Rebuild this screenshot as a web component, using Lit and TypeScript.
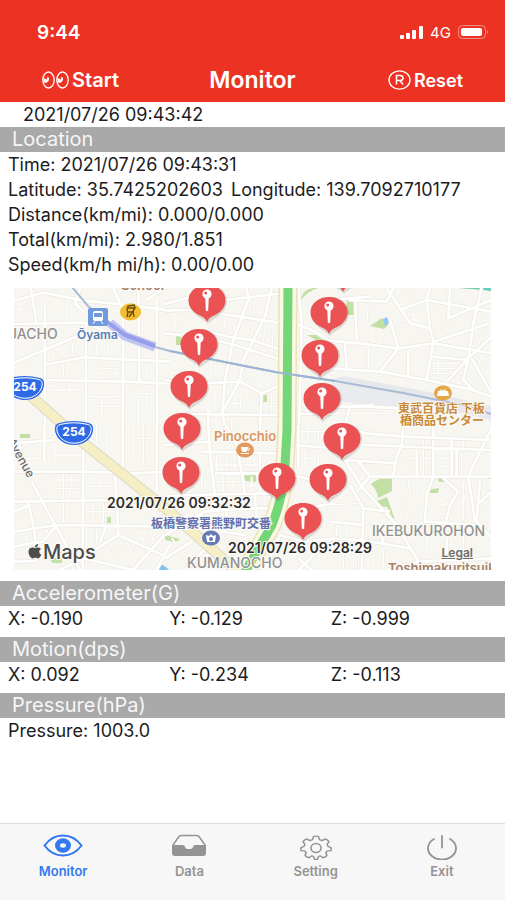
import { LitElement, html, svg, css } from "lit";
import { customElement, property, state } from "lit/decorators.js";

/* Map data: streets are grouped in tiles drawn at three times the map scale. */
interface Tile {
  x: number;
  y: number;
  streets: string;
  lanes: string;
}

const TILES: Tile[] = [
  {
    x: -14, y: -8,
    streets:
      "M42 62L130 38 250 62 395 76 510 92M42 132L255 128 330 160M92 24L110 132M135 75V450M42 248L240 165M133 255L250 232 510 245M258 135V450M133 300L370 305 510 310M370 165L368 450M415 24L418 305M470 60L472 450M340 24L365 80 372 165M240 24L225 70 255 100M500 20L440 60",
    lanes:
      "M42 92L100 80M60 62V130M160 50L165 128M200 55V128M290 200V232M325 195V240M190 245V300M210 300V420M305 350V430M260 350H368M285 380H368M330 350V385M300 265H350V300M415 340H470M415 340V450M440 340V400M215 180L220 235M160 190V250M60 170V245M90 160V230M100 310H133M150 330H250M180 330V420M415 250V305M440 250V305",
  },
  {
    x: 151, y: -8,
    streets:
      "M0 72L80 50M180 60L350 40M160 100L355 130M245 24L250 60 205 180 180 300 172 400 182 450M320 24L300 110 235 240 225 300 170 400M150 180L210 195 350 240M0 92L70 90M0 300L60 310 20 290M110 310L225 305 290 340 340 318M290 340L285 450M60 402L350 405M95 255L100 310M130 390V450M0 160L50 165M400 135L440 150 510 190M400 24L410 130 402 450M400 402H510M260 180L350 210M110 150L190 170 270 182",
    lanes:
      "M190 60L175 160M215 115L205 170M270 60L260 170M300 150L290 215M325 130L320 230M30 100V150M140 210L135 300M160 260H210M225 250L350 290M250 300L245 320M150 330V395M210 340V400M190 370H225M230 320L225 400M320 340V400M300 380H350M310 290V320M200 420V450M240 410V450M315 410V450M390 180H430M390 230H410M70 370V400",
  },
  {
    x: 316, y: -8,
    streets:
      "M55 60L170 65 190 24M0 60L120 50M170 24L200 70 240 130 300 145 310 185 480 130M210 90L290 60 485 95M75 60L80 180M0 182L90 190 205 205 310 190 485 220M205 205L150 275M180 120L205 205M300 24L290 60 300 145M360 24L355 115 485 60M455 24L430 130 415 235 350 305M310 190L290 300M0 265L150 275 290 300 410 325 485 350M415 235L400 300 430 330M425 235L485 340M45 190L50 265M300 230L415 240M235 210V290M0 380L120 380 210 385M40 450L60 380 130 375M485 170L415 235",
    lanes:
      "M110 80L115 140M150 70V110M100 145V190M125 145V190M150 140V195M225 60L250 20M245 80L255 130M270 120H200M320 80L330 130M395 40L400 100M365 120L370 165M400 150L395 190M340 190L335 230M295 250H380M295 265H375M295 280H365M440 160L455 210M455 220L440 270 460 300M90 200V268M115 200V270M170 220L235 215M325 240V300M270 200V290M120 400V450M180 400V450M15 400H180M380 260L410 300",
  },
  {
    x: -14, y: 137,
    streets:
      "M42 55L160 45M42 140L250 140 400 145 510 140M42 230L350 225 510 220M133 0V110M250 60L248 435M95 170L160 290 240 435M42 320L170 300 510 305M42 410L110 408M85 230L105 330 110 410M368 0V145M470 0V200M345 145L350 225 355 330 245 400M510 310L400 435M355 330L510 400M180 435L250 400 400 435M42 365L130 350M130 350L170 300M510 360L470 435M320 300L300 350M42 260L90 240",
    lanes:
      "M60 55V140M90 55V140M42 100H133M165 60V140M210 60V140M165 90H245M190 145V225M215 150L210 210 180 240M165 165H248M165 190H230M190 230V300M270 150V220M300 160V220M250 185H345M310 230V300M280 230V300M250 260H345M400 0V90M430 0V110M400 40H470M60 235L70 320M60 330V400M80 330V400M140 310L155 370M190 320L215 360M260 310V380M290 310V350M420 310L430 360M380 350L420 435M450 310L460 350M330 350L345 400M300 370L330 420M400 20V50M290 60V0M320 80V20",
  },
  {
    x: 151, y: 137,
    streets:
      "M0 215L60 210M60 210L340 205M130 0L135 90 150 210 140 260M182 0L215 60 235 170 240 210M110 80L340 85M150 145L350 145M180 210L185 275M0 60L130 50M285 85V210M270 210L275 280M0 330L120 260 230 250 330 250M60 435L170 320 240 330M400 0V130M380 60L510 70M385 150L440 165M345 260L510 235M345 330L420 350 510 340M110 390L230 400M0 400L80 350M300 435L345 330M180 435L200 350M400 400L440 435M510 330L400 435",
    lanes:
      "M60 0V80M90 20V60M155 90V145M185 60V145M210 90V145M255 90V150M310 90V150M150 120H280M155 170H235M175 150V205M205 150V205M260 155V205M310 155V205M250 180H340M110 150V210M210 210V250M235 215V250M300 210V250M390 20H480M430 0V70M460 0V70M390 100H450M420 75V130M460 75V120M390 220L400 260M20 340L60 390M80 310L120 370M140 340L170 390M240 330L260 390M280 300L300 340M355 350L360 430M390 350V400M480 350V420",
  },
  {
    x: 316, y: 137,
    streets:
      "M45 105L95 185 200 300 265 410 270 435M85 20L110 25 225 35 485 45M100 60L485 75M220 0L215 60 195 110 190 155M120 155H485M85 110L120 155 80 200M485 10L430 120 415 155 435 290M310 155L290 210 285 290 435 300M340 160L385 200 360 240 345 300M60 180L100 250 95 435M0 290L100 300M100 250L180 260M45 105L200 115M260 75V155M310 0V155M365 45V155M380 75V155M265 410L485 400M0 340L95 345 240 370M170 435L265 410M450 160L440 290 485 340M485 200L440 240M150 300L160 360M350 340V400",
    lanes:
      "M120 30V100M150 30V115M180 35V110M240 40V70M280 45V155M335 45V75M400 45V75M440 50V80M230 100H310M320 100H365M320 125H365M395 90V150M420 80V110M235 165L240 210 230 280M260 180V200M320 215L350 235M325 240H350M320 270L350 265M400 170V280M410 200L395 240M120 320V360M20 300V340M50 300V345M40 350V430M70 350V430M130 370V430M160 375V420M200 340V370M220 350V400M290 300V400M320 305V400M400 300V400M0 200L50 215M0 240L90 235",
  },
];

const PARKS = [
  "M162 47h5v10h-5z", "M247 107h6v7h-6z", "M286 11q5 -11 14 -11l4 0q-10 3 -17 12z",
  "M333 12h7v15h-9z", "M293 47h9l14 9v4z", "M6 146h10v4H6z",
  "M357 196q10 -8 21 -7v14l-14 7q0 -7 -7 -14z", "M363 213l10 -4 7 20v4l-7 -14 -9 -1z",
  "M414 202l11 -2 -1 5 -10 0z", "M424 190h6v4h-5z", "M226 187h16v7l-10 -1z",
  "M93 229h4v6h-4z", "M151 247l15 4 -4 3 -11 -2z", "M445 0h33v3z", "M36 270h12v5H38z",
];

/* Tip of each pin, in map coordinates. */
const PINS: [number, number][] = [
  [329, 4], [193, 34], [315, 46], [185, 78], [306, 89], [175, 120], [308, 132],
  [168, 162], [328, 172], [167, 206], [263, 212], [314, 213], [289, 252],
];

@customElement("track-map")
export class TrackMap extends LitElement {
  static styles = css`
    :host { display: block; position: relative; }
    .canvas { display: block; width: 100%; height: auto; }
    .lane { fill: none; stroke: #fff; stroke-width: 4; }
    .lane-edge { fill: none; stroke: #eeebe3; stroke-width: 7; }
    .street-edge { fill: none; stroke: #ebe8df; stroke-width: 12; stroke-linejoin: round; }
    .street { fill: none; stroke: #fff; stroke-width: 8; stroke-linejoin: round; }
    .label { font-family: Inter, "Liberation Sans", sans-serif; font-weight: 600; stroke: #fbfaf6; stroke-width: 2; paint-order: stroke; }
    .cjk { font-family: "Noto Sans CJK JP", sans-serif; font-weight: 700; font-size: 12px; }
    .district { fill: #929292; font-size: 14px; font-weight: 500; }
    .station { fill: #5580b8; font-size: 12px; }
    .shop { fill: #c98a3a; }
    .cafe { fill: #d99561; font-size: 13px; }
    .police { fill: #6370ad; }
    .school { fill: #a37f6a; font-size: 13px; }
    .avenue { fill: #6b6b6b; font-size: 12px; font-weight: 500; }
    .shield { fill: #fff; font-size: 12px; font-weight: 700; stroke: none; }
    .stamp { fill: #2c2c2e; font-size: 14px; }
    .brand { fill: #4c4c4c; font-size: 20px; font-weight: 500; }
    .legal {
      position: absolute; right: 18px; bottom: 10px;
      font: 600 12px/14px Inter, "Liberation Sans", sans-serif; color: #6f6f6f;
    }
  `;

  private pin([x, y]: [number, number]) {
    return svg`
      <g transform="translate(${x} ${y})">
        <path d="M0 1C-3 -4 -19 -8 -19 -22C-19 -32 -10 -38 0 -38C10 -38 19 -32 19 -22C19 -8 3 -4 0 1Z" fill="#000" opacity=".12" transform="translate(1 1)" />
        <path d="M0 0C-2 -5 -6 -6 -10 -8C-15 -11 -18.500 -16 -18.500 -21.500C-18.500 -31 -10 -37 0 -37C10 -37 18.500 -31 18.500 -21.500C18.500 -16 15 -11 10 -8C6 -6 2 -5 0 0Z" fill="#eb5254" />
        <path d="M-1.700 -24L-1.200 -11.500Q0 -10 1.200 -11.500L1.700 -24Z" fill="#fff" />
        <circle cx="0" cy="-28" r="4.600" fill="#fff" />
        <circle cx="-1.300" cy="-29" r="1.500" fill="#eb5254" />
      </g>`;
  }

  private shield(x: number, y: number) {
    return svg`
      <g transform="translate(${x} ${y})">
        <path d="M-15 -10Q0 -14 15 -10Q20 -9 19 -2C17 8 8 12 0 12C-8 12 -17 8 -19 -2Q-20 -9 -15 -10Z" fill="#2f6be6" />
        <path d="M-14 -8.500Q0 -12 14 -8.500Q18 -7.500 17 -2C15 6 8 10.200 0 10.200C-8 10.200 -15 6 -17 -2Q-18 -7.500 -14 -8.500Z" fill="none" stroke="#fff" />
        <text class="label shield" x="0" y="3" text-anchor="middle">254</text>
      </g>`;
  }

  render() {
    return html`
      <svg class="canvas" viewBox="0 0 477 282" role="img" aria-label="Map of the recorded track">
        <rect width="477" height="282" fill="#f8f6f0" />
        <path d="M316 92L389 105 477 126V118L420 105 330 88Z M316 93L477 132V124L400 105Z" fill="#e7e8ec" />
        <path d="M318 94L390 106 440 118 400 121 318 113Z" fill="#eaebee" />
        ${PARKS.map((d) => svg`<path d=${d} fill="#c2dfa4" />`)}
        <path d="M445 0h33v2z M460 0h17v3z" fill="#67c8c4" />
        <path d="M474 188h4v3h-4z M142 278q6 -4 13 4h-10z" fill="#80c5ef" />
        ${TILES.map((t) => svg`
          <g transform="translate(${t.x} ${t.y}) scale(.33333)">
            <path class="lane-edge" d=${t.lanes} />
            <path class="lane" d=${t.lanes} />
          </g>`)}
        ${TILES.map((t) => svg`
          <g transform="translate(${t.x} ${t.y}) scale(.33333)">
            <path class="street-edge" d=${t.streets} />
            <path class="street" d=${t.streets} />
          </g>`)}
        <path d="M356 38L368 30 374 37 370 41Z" fill="#c2dfa4" />
        <path d="M369 31l4 -2 2 6 -4 3z" fill="#94c8f2" />

        <path d="M10 102L72 157 156 224 226 286" fill="none" stroke="#dcd9c6" stroke-width="11" />
        <path d="M10 102L72 157 156 224 226 286" fill="none" stroke="#f6efc6" stroke-width="9" />

        <path d="M58 -1L74 18 96 36 111 49 141 59 156 63 261 84 321 93 389 105 449 117 477 126" fill="none" stroke="#a9bbd6" stroke-width="2" />
        <path d="M96 35L111 48 141 59" fill="none" stroke="#c0c4f2" stroke-width="9" />
        <path d="M92 33L111 47 141 58" fill="none" stroke="#959ee8" stroke-width="4" />

        <path d="M274 -1L273 142 271 177Q270 206 258 237L231 284" fill="none" stroke="#e9e3b5" stroke-width="19" />
        <path d="M274 -1L273 142 271 177Q270 206 258 237L231 284" fill="none" stroke="#fbf8e6" stroke-width="16" />
        <path d="M274 -1L273 142 271 177Q270 206 258 237L231 284" fill="none" stroke="#74d777" stroke-width="9" />
        <path d="M156 63L261 84 321 93" fill="none" stroke="#9db3d3" stroke-width="2" />

        <text class="label district" x="-5" y="51">JACHO</text>
        <text class="label district" x="173" y="280">KUMANOCHO</text>
        <text class="label district" x="358" y="248">IKEBUKUROHON</text>
        <text class="label school" x="107" y="2">School</text>
        <text class="label school" x="374" y="285">Toshimakuritsuik</text>
        <text class="label avenue" transform="translate(-7 153) rotate(61)">Avenue</text>

        <rect x="74" y="20" width="20" height="18" rx="2" fill="#6f9bdc" />
        <rect x="79" y="23" width="10" height="10" rx="2" fill="#fff" />
        <path d="M80 25h8v4h-8z" fill="#6f9bdc" />
        <path d="M81 33l-2 3M87 33l2 3" stroke="#fff" fill="none" />
        <text class="label station" x="63" y="51">Ōyama</text>

        <ellipse cx="116.500" cy="24" rx="10.500" ry="8.500" fill="#f3bd2f" />
        <path d="M113 29l1 -5 -1 -2 1 -4 6 -1 1 3 -2 3 1 6M113 20h7M114 24h6M115 29l3 -4" fill="none" stroke="#6b4c14" stroke-width="1.400" />

        <ellipse cx="429" cy="105" rx="9" ry="7.500" fill="#e5a645" />
        <path d="M424 103h10l1 5h-12z" fill="#fff" />
        <path d="M426 103q1 -3 3 0q2 -3 3 0" fill="none" stroke="#fff" />
        <text class="label cjk shop" x="384" y="125">東武百貨店 下板</text>
        <text class="label cjk shop" x="386" y="137">橋商品センター</text>

        <text class="label cafe" x="200" y="153">Pinocchio</text>
        <ellipse cx="231" cy="162" rx="9" ry="7.500" fill="#e29a5f" />
        <path d="M227 159h7q0 5 -3 5h-1q-3 0 -3 -5z M227 165h8v1h-8z" fill="#fff" />
        <path d="M234 160q3 0 0 3" fill="none" stroke="#fff" />

        <text class="label cjk police" x="137" y="240">板橋警察署熊野町交番</text>
        <ellipse cx="197" cy="250" rx="9" ry="7.500" fill="#6678b5" />
        <path d="M192 247l3 1 2 -2 2 2 3 -1 -1 7h-8z" fill="#fff" />
        <circle cx="197" cy="251" r="2" fill="#6678b5" />

        ${this.shield(11, 100)} ${this.shield(60, 145)}
        ${PINS.map((p) => this.pin(p))}

        <text class="label stamp" x="93" y="220">2021/07/26 09:32:32</text>
        <text class="label stamp" x="214" y="265">2021/07/26 09:28:29</text>

        <path transform="translate(13 256) scale(.66 .6)" fill="#4c4c4c"
          d="M12.152 6.896c-.948 0-2.415-1.078-3.960-1.040-2.040.027-3.910 1.183-4.961 3.014-2.117 3.675-.546 9.103 1.519 12.090 1.013 1.454 2.208 3.090 3.792 3.039 1.520-.065 2.090-.987 3.935-.987 1.831 0 2.350.987 3.960.948 1.637-.026 2.676-1.480 3.676-2.948 1.156-1.688 1.636-3.325 1.662-3.415-.039-.013-3.182-1.221-3.220-4.857-.026-3.040 2.480-4.494 2.597-4.559-1.429-2.090-3.623-2.324-4.390-2.376-2-.156-3.675 1.090-4.610 1.090zM15.530 3.830c.843-1.012 1.400-2.427 1.245-3.830-1.207.052-2.662.805-3.532 1.818-.780.896-1.454 2.338-1.273 3.714 1.338.104 2.715-.688 3.559-1.701" />
        <text class="label brand" x="29" y="271">Maps</text>
      </svg>
      <a class="legal" href="#legal">Legal</a>
    `;
  }
}

/* A grey heading bar followed by its readings. */
@customElement("sensor-section")
export class SensorSection extends LitElement {
  @property() heading = "";

  static styles = css`
    :host { display: block; }
    .heading {
      margin: 0; padding: 0 12px; background: #a9a9a9; color: #f6f6f6;
      font-size: 20px; line-height: 25px; font-weight: 400;
    }
  `;

  render() {
    return html`<h2 class="heading">${this.heading}</h2><slot></slot>`;
  }
}

const eye = svg`
  <svg class="icon" width="40" height="28" viewBox="0 0 40 28" fill="none" stroke="currentColor" stroke-width="2" aria-hidden="true">
    <path d="M1.500 13.500C7 6 13 3.500 20 3.500S33 6 38.500 13.500C33 21 27 23.500 20 23.500S7 21 1.500 13.500Z" />
    <ellipse cx="20" cy="13.500" rx="5.500" ry="4.700" stroke-width="5" />
  </svg>`;
const tray = svg`
  <svg class="icon" width="40" height="28" viewBox="0 0 40 28" aria-hidden="true">
    <path d="M4 13L10 4.500Q11 3.500 13 3.500H27Q29 3.500 30 4.500L36 13" fill="none" stroke="currentColor" stroke-width="1.500" />
    <path d="M3 13H14Q15.500 13 16 15T18.500 17H21.500Q23.500 17 24 15T26 13H37V21Q37 24 34 24H6Q3 24 3 21Z" fill="currentColor" />
  </svg>`;
const gear = svg`
  <svg class="icon" width="40" height="28" viewBox="0 0 40 28" fill="none" stroke="currentColor" stroke-width="1.600" stroke-linejoin="round" aria-hidden="true">
    <path d="M17.500 3.500Q20 2.500 22.500 3.500L23.500 7L26 8L29.500 6.200Q32 7.500 33 9.500L31 12.300L32 14.500L35 16Q35.500 18 34.800 19.500L31 20L29.800 22L31 25Q29.500 27 27 27.500L24.500 25.500L22.500 26L21.500 29.200Q20 29.600 18.500 29.200L17.500 26L15.500 25.500L13 27.500Q10.500 27 9 25L10.200 22L9 20L5.200 19.500Q4.500 18 5 16L8 14.500L9 12.300L7 9.500Q8 7.500 10.500 6.200L14 8L16.500 7Z" transform="translate(0 1.500) scale(1 .88)" />
    <ellipse cx="20" cy="16" rx="5" ry="4.500" />
  </svg>`;
const power = svg`
  <svg class="icon" width="40" height="28" viewBox="0 0 40 28" fill="none" stroke="currentColor" stroke-width="1.800" stroke-linecap="round" aria-hidden="true">
    <path d="M20 4V15.500" />
    <path d="M12 7A14 11.300 0 1 0 28 7" />
  </svg>`;

const TABS = [
  { name: "Monitor", icon: eye },
  { name: "Data", icon: tray },
  { name: "Setting", icon: gear },
  { name: "Exit", icon: power },
];

@customElement("app-root")
export class AppRoot extends LitElement {
  @state() private tab = "Monitor";

  static styles = css`
    :host {
      display: flex; flex-direction: column; box-sizing: border-box; min-height: 100vh;
      padding-right: 2px; background: #fff; color: #1c1c1e;
      font-family: Inter, "Liberation Sans", sans-serif; font-size: 18px; line-height: 25px;
    }
    .top { background: #ec3323; color: #fff; }
    .status { display: flex; align-items: center; justify-content: space-between; height: 58px; padding: 6px 16px 0 37px; box-sizing: border-box; }
    .clock { font-size: 19px; font-weight: 600; }
    .signals { display: flex; align-items: center; gap: 7px; font-size: 15px; }
    .nav { display: grid; grid-template-columns: 1fr auto 1fr; align-items: center; height: 44px; padding: 0 42px; }
    .title { margin: 0; font-size: 23px; font-weight: 600; }
    .action {
      display: flex; align-items: center; gap: 3px; padding: 0; border: 0; background: none;
      color: inherit; font: inherit; font-size: 20px; font-weight: 600; cursor: pointer; justify-self: start;
    }
    .action.end { font-size: 18px; justify-self: end; }
    .now { padding: 0 23px; }
    .row { margin: 0; padding: 0 8px; }
    .pair { display: flex; flex-wrap: wrap; column-gap: 8px; }
    .axes { display: grid; grid-template-columns: repeat(3, 1fr); padding: 0 13px 0 8px; }
    .map { margin: 11px 14px; }
    .sensors { display: flex; flex-direction: column; gap: 6px; }
    .tabs {
      display: grid; grid-template-columns: repeat(4, 1fr); margin-top: auto; height: 77px;
      box-sizing: border-box; border-top: 1px solid #dcdcdc; background: #f7f7f7;
    }
    .tab {
      display: flex; flex-direction: column; align-items: center; gap: 2px; padding: 8px 0 0;
      border: 0; background: none; color: #949494; font: inherit; font-size: 13px;
      line-height: 18px; font-weight: 600; cursor: pointer;
    }
    .tab.active { color: #3478f0; }
    .icon { display: block; }
  `;

  render() {
    return html`
      <header class="top">
        <div class="status">
          <span class="clock">9:44</span>
          <span class="signals">
            <svg width="23" height="13" viewBox="0 0 23 13" fill="#fff" aria-hidden="true">
              <rect x="0" y="9" width="4" height="4" rx="1" /><rect x="6" y="7" width="4" height="6" rx="1" />
              <rect x="12" y="4" width="4" height="9" rx="1" /><rect x="19" y="0" width="4" height="13" rx="1" />
            </svg>
            4G
            <svg width="31" height="14" viewBox="0 0 31 14" aria-hidden="true">
              <rect x=".5" y=".5" width="27" height="13" rx="4" fill="none" stroke="#fff" opacity=".45" />
              <rect x="3" y="3" width="21" height="8" rx="2" fill="#fff" />
              <path d="M29 5q2 2 0 4z" fill="#fff" opacity=".5" />
            </svg>
          </span>
        </div>
        <div class="nav">
          <button class="action" type="button">
            <svg width="27" height="18" viewBox="0 0 27 18" fill="none" stroke="#fff" stroke-width="1.300" aria-hidden="true">
              <ellipse cx="6.500" cy="9" rx="5.700" ry="8" /><ellipse cx="20.500" cy="9" rx="5.700" ry="8" />
              <path d="M1.500 7L5 8.500L5.500 5.500A3.200 3.200 0 1 1 1.500 11Z" fill="#fff" stroke="none" />
              <path d="M15.500 7L19 8.500L19.500 5.500A3.200 3.200 0 1 1 15.500 11Z" fill="#fff" stroke="none" />
            </svg>
            Start
          </button>
          <h1 class="title">Monitor</h1>
          <button class="action end" type="button">
            <svg width="23" height="20" viewBox="0 0 23 20" fill="none" stroke="#fff" aria-hidden="true">
              <ellipse cx="11.500" cy="10" rx="10.500" ry="9.200" stroke-width="1.300" />
              <path d="M8.500 14.500V5.500H12Q15 5.500 15 8T12 10.500H8.500M12 10.500L15 14.500" stroke-width="1.500" />
            </svg>
            Reset
          </button>
        </div>
      </header>

      <main>
        <div class="now">2021/07/26 09:43:42</div>
        <sensor-section heading="Location">
          <p class="row">Time: 2021/07/26 09:43:31</p>
          <p class="row pair"><span>Latitude: 35.7425202603</span><span>Longitude: 139.7092710177</span></p>
          <p class="row">Distance(km/mi): 0.000/0.000</p>
          <p class="row">Total(km/mi): 2.980/1.851</p>
          <p class="row">Speed(km/h mi/h): 0.00/0.00</p>
          <track-map class="map"></track-map>
        </sensor-section>
        <div class="sensors">
          <sensor-section heading="Accelerometer(G)">
            <div class="axes"><span>X: -0.190</span><span>Y: -0.129</span><span>Z: -0.999</span></div>
          </sensor-section>
          <sensor-section heading="Motion(dps)">
            <div class="axes"><span>X: 0.092</span><span>Y: -0.234</span><span>Z: -0.113</span></div>
          </sensor-section>
          <sensor-section heading="Pressure(hPa)">
            <p class="row">Pressure: 1003.0</p>
          </sensor-section>
        </div>
      </main>

      <nav class="tabs">
        ${TABS.map((t) => html`
          <button type="button" class="tab ${t.name === this.tab ? "active" : ""}" @click=${() => (this.tab = t.name)}>
            ${t.icon}${t.name}
          </button>`)}
      </nav>
    `;
  }
}
